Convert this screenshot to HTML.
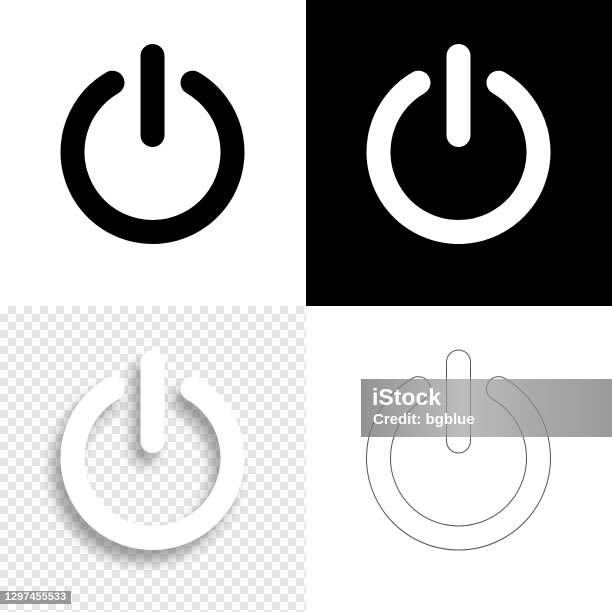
<!DOCTYPE html>
<html><head><style>
html,body{margin:0;padding:0;width:612px;height:612px;overflow:hidden;background:#fff}
.q{position:absolute;width:306px;height:306px}
svg{position:absolute;left:0;top:0}
</style></head><body>
<div class="q" style="left:0;top:0;background:#fff"></div>
<div class="q" style="left:306px;top:0;background:#000"></div>
<div class="q" style="left:0;top:306px;background-color:#fff;background-image:linear-gradient(45deg,#e6e6e6 25%,transparent 25%,transparent 75%,#e6e6e6 75%),linear-gradient(45deg,#e6e6e6 25%,transparent 25%,transparent 75%,#e6e6e6 75%);background-size:16px 16px;background-position:0 0,8px 8px"></div>
<div class="q" style="left:306px;top:306px;background:#fff"></div>
<svg width="612" height="612" viewBox="0 0 612 612">
<defs>
<path id="p" d="M112.5 82.7 A80 80 0 1 0 192.5 82.7 M152.5 56 L152.5 135" fill="none" stroke-linecap="round"/>
<filter id="b" x="-30%" y="-30%" width="160%" height="160%"><feGaussianBlur stdDeviation="7"/></filter>
</defs>
<use href="#p" stroke="#000" stroke-width="24"/>
<use href="#p" x="306" stroke="#fff" stroke-width="24"/>
<g filter="url(#b)" opacity="0.55"><use href="#p" x="-8" y="318" stroke="#555" stroke-width="24"/></g>
<use href="#p" y="306" stroke="#fff" stroke-width="24"/>
<use href="#p" x="306" y="306" stroke="#555" stroke-width="25"/>
<use href="#p" x="306" y="306" stroke="#fff" stroke-width="23"/>
</svg>
<div style="position:absolute;left:361px;top:379px;width:251px;height:58px;background:linear-gradient(90deg,rgba(120,120,120,0.8),rgba(160,160,160,0.7) 40%,rgba(140,140,140,0.75) 70%,rgba(130,130,130,0.8));"></div>
<div style="position:absolute;left:372px;top:384px;color:#fff;font:bold 23px 'Liberation Sans',sans-serif;">iStock</div>
<div style="position:absolute;left:373px;top:411px;color:#fff;font:bold 15px 'Liberation Sans',sans-serif;">Credit: bgblue</div>
<div style="position:absolute;left:0;top:591px;width:71px;height:13px;background:rgba(120,120,120,0.75);color:#fff;font:bold 11px/13px 'Liberation Sans',sans-serif;text-align:center">1297455533</div>
</body></html>
